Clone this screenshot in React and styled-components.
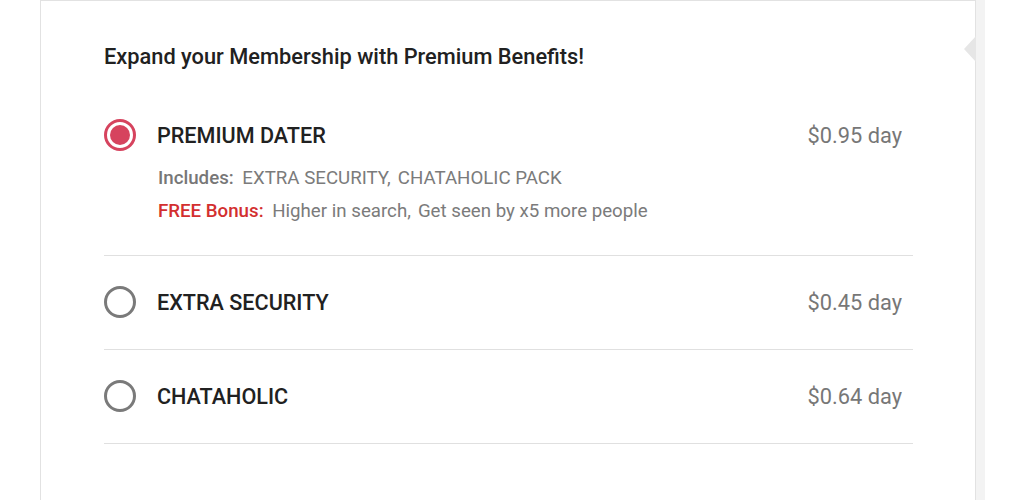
import React from 'react'
import styled, { createGlobalStyle } from 'styled-components'

const GlobalStyle = createGlobalStyle`
  *, *::before, *::after { box-sizing: border-box; }
  body {
    margin: 0;
    background: #ffffff;
    font-family: Roboto, "Liberation Sans", sans-serif;
  }
`;

const Page = styled.div`
  display: flex;
  align-items: stretch;
  height: 500px;
  padding-left: 40px;
  overflow: hidden;
`;

const Card = styled.div`
  position: relative;
  width: 936px;
  border: 1px solid #e2e2e2;
  border-bottom: none;
  background: #fff;
  padding: 43px 62px 0 63px;
`;

const SideStrip = styled.div`
  width: 9px;
  background: #f3f3f3;
`;

const Notch = styled.div`
  position: absolute;
  right: -1px;
  top: 35px;
  width: 0;
  height: 0;
  border-top: 13px solid transparent;
  border-bottom: 13px solid transparent;
  border-right: 12px solid #e6e6e6;
`;

const Heading = styled.h2`
  margin: 0 0 19px 0;
  font-size: 21.8px;
  line-height: 26px;
  font-weight: 500;
  color: #212121;
`;

const Option = styled.div`
  border-bottom: 1px solid #e0e0e0;
  padding: 30px 0 ${p => (p.$expanded ? '27px' : '31px')} 0;
`;

const OptionRow = styled.div`
  display: flex;
  align-items: center;
  height: 32px;
`;

const Radio = styled.span`
  width: 32px;
  height: 32px;
  border-radius: 50%;
  border: 3px solid ${p => (p.$checked ? '#d6435e' : '#7a7a7a')};
  display: flex;
  align-items: center;
  justify-content: center;
  flex-shrink: 0;

  &::after {
    content: '';
    display: ${p => (p.$checked ? 'block' : 'none')};
    width: 20px;
    height: 20px;
    border-radius: 50%;
    background: #d6435e;
  }
`;

const Title = styled.span`
  margin-left: 21px;
  font-size: 21.6px;
  font-weight: 500;
  color: #212121;
  flex: 1;
`;

const Price = styled.span`
  margin-right: 11px;
  font-size: 21.8px;
  color: #777;
`;

const Details = styled.div`
  margin: 11px 0 0 54px;
`;

const DetailLine = styled.div`
  font-size: 18.7px;
  line-height: 33px;
  color: #7b7b7b;
`;

const Label = styled.span`
  font-weight: 500;
  color: ${p => (p.$red ? '#d32f2f' : '#777')};
  margin-right: 4px;
`;

const Item = styled.span`
  & + & {
    margin-left: 7px;
  }
`;

const options = [
  {
    name: 'PREMIUM DATER',
    price: '$0.95 day',
    checked: true,
    includes: ['EXTRA SECURITY,', 'CHATAHOLIC PACK'],
    bonus: ['Higher in search,', 'Get seen by x5 more people'],
  },
  { name: 'EXTRA SECURITY', price: '$0.45 day' },
  { name: 'CHATAHOLIC', price: '$0.64 day' },
];

export default function App() {
  return (
    <>
      <GlobalStyle />
      <Page>
        <Card>
          <Notch />
          <Heading>Expand your Membership with Premium Benefits!</Heading>
          {options.map(o => (
            <Option key={o.name} $expanded={!!o.includes}>
              <OptionRow>
                <Radio $checked={o.checked} />
                <Title>{o.name}</Title>
                <Price>{o.price}</Price>
              </OptionRow>
              {o.includes && (
                <Details>
                  <DetailLine>
                    <Label>Includes:</Label>{' '}
                    {o.includes.map(t => <Item key={t}>{t}</Item>)}
                  </DetailLine>
                  <DetailLine>
                    <Label $red>FREE Bonus:</Label>{' '}
                    {o.bonus.map(t => <Item key={t}>{t}</Item>)}
                  </DetailLine>
                </Details>
              )}
            </Option>
          ))}
        </Card>
        <SideStrip />
      </Page>
    </>
  )
}
